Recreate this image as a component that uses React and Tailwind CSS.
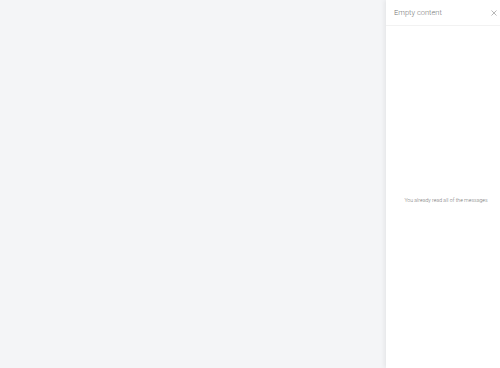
export default function App() {
  return (
    <div className="flex h-[368px] w-[500px] bg-[#f4f5f7] font-['Roboto',sans-serif]">
      <div className="flex-1" />
      <aside className="flex w-[114px] flex-col bg-white shadow-[-2px_0_4px_rgba(0,0,0,0.06)]">
        <div className="flex h-[26px] items-center justify-between border-b border-[#f2f2f2] pl-[8px] pr-[3px]">
          <span className="text-[7.5px] font-light text-[#777]">Empty content</span>
          <svg width="6" height="6" viewBox="0 0 6 6" fill="none" stroke="#999" strokeWidth="0.7">
            <path d="M0.5 0.5L5.5 5.5M5.5 0.5L0.5 5.5" />
          </svg>
        </div>
        <div className="flex flex-1 items-center justify-center pl-[6px] pt-[7px]">
          <p className="text-[5.2px] font-light text-[#777]">You already read all of the messages</p>
        </div>
      </aside>
    </div>
  )
}
